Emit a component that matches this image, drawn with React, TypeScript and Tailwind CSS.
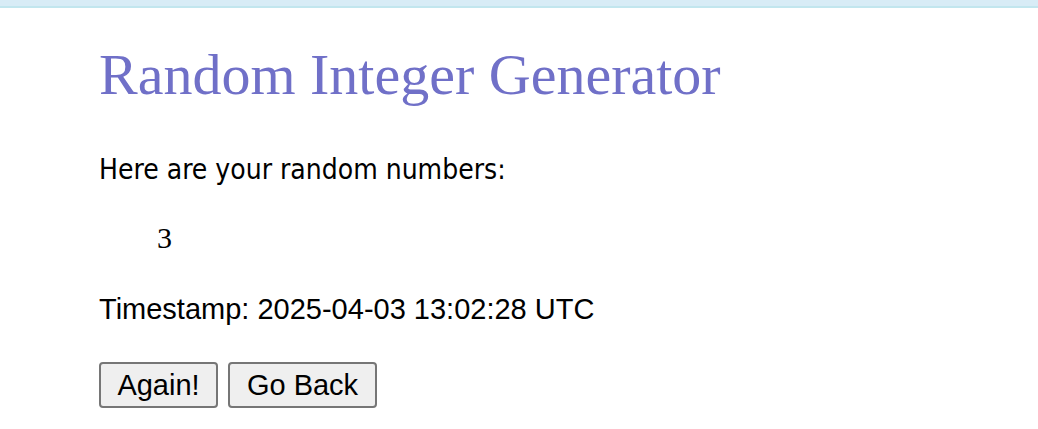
export default function App() {
  return (
    <div className="min-h-screen bg-white">
      <div className="h-[8px] border-b-2 border-[#c2e6ee] bg-[#d8ecf6]" />
      <div className="pl-[99px] pt-[32px]">
        <h1 className="font-['Liberation_Serif',serif] text-[58px] leading-[1.2] text-[#7070c8]">
          Random Integer Generator
        </h1>
        <p className="mt-[42px] font-['DejaVu_Sans',sans-serif] font-stretch-condensed text-[28px] leading-[1.3] text-black">
          Here are your random numbers:
        </p>
        <div className="mt-[35px] pl-[58px] font-['Liberation_Serif',serif] text-[30px] leading-none text-black">
          3
        </div>
        <p className="mt-[39px] font-['Liberation_Sans',sans-serif] text-[29px] leading-[1.2] text-black">
          Timestamp: 2025-04-03 13:02:28 UTC
        </p>
        <div className="mt-[35px] flex gap-[10px]">
          <button className="h-[46px] w-[119px] rounded-[4px] border-2 border-[#767676] bg-[#efefef] font-['Liberation_Sans',sans-serif] text-[29px] text-black">
            Again!
          </button>
          <button className="h-[46px] w-[149px] rounded-[4px] border-2 border-[#767676] bg-[#efefef] font-['Liberation_Sans',sans-serif] text-[29px] text-black">
            Go Back
          </button>
        </div>
      </div>
    </div>
  );
}
